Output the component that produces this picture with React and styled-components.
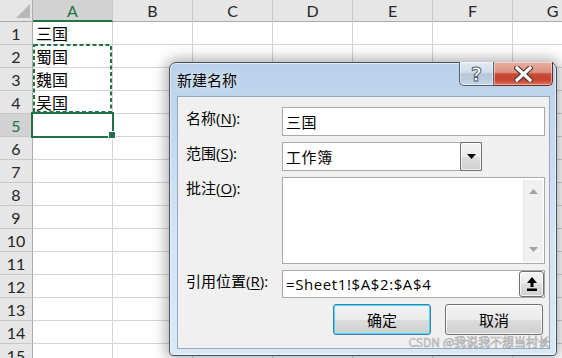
import React from 'react';
import styled, { createGlobalStyle, css } from 'styled-components';

const GlobalStyle = createGlobalStyle`
  html, body { margin: 0; padding: 0; background: #fff; overflow: hidden; }
  #root { width: 562px; height: 358px; overflow: hidden; }
`;

const Screen = styled.div`
  position: relative;
  width: 562px;
  height: 358px;
  overflow: hidden;
  background: #fff;
`;

/* ---------- spreadsheet ---------- */
const Sheet = styled.div`
  display: grid;
  grid-template-columns: 33px repeat(7, 80px);
  grid-template-rows: 22px;
  grid-auto-rows: 23px;
  width: 593px;
`;

const Corner = styled.div`
  position: relative;
  box-sizing: border-box;
  background: #e6e6e6;
  border-right: 1px solid #ababab;
  border-bottom: 1px solid #ababab;
  &::after {
    content: '';
    position: absolute;
    right: 2px;
    bottom: 3px;
    width: 0;
    height: 0;
    border-left: 14px solid transparent;
    border-bottom: 14px solid #b8b8b8;
  }
`;

const ColHead = styled.div`
  box-sizing: border-box;
  display: flex;
  align-items: center;
  justify-content: center;
  font-family: Lato, 'Liberation Sans', sans-serif;
  font-size: 16px;
  color: #262626;
  background: #e6e6e6;
  border-right: 1px solid #c8c8c8;
  border-bottom: 1px solid #ababab;
  ${(p) =>
    p.$active &&
    css`
      background: #d2d2d2;
      color: #217346;
      border-bottom: 2px solid #217346;
      padding-top: 1px;
    `}
`;

const RowHead = styled.div`
  box-sizing: border-box;
  display: flex;
  align-items: center;
  justify-content: center;
  font-family: Lato, 'Liberation Sans', sans-serif;
  font-size: 16px;
  color: #262626;
  background: #e6e6e6;
  border-right: 1px solid #ababab;
  border-bottom: 1px solid #c8c8c8;
  ${(p) =>
    p.$active &&
    css`
      background: #d2d2d2;
      color: #217346;
      border-right: 2px solid #217346;
      padding-left: 1px;
    `}
`;

const Cell = styled.div`
  box-sizing: border-box;
  display: flex;
  align-items: center;
  padding-left: 3px;
  font-family: 'Noto Sans CJK SC', sans-serif;
  font-size: 16px;
  color: #000;
  border-right: 1px solid #d4d4d4;
  border-bottom: 1px solid #d4d4d4;
  white-space: nowrap;
  overflow: hidden;
`;

const Marquee = styled.svg`
  position: absolute;
  left: 33px;
  top: 44px;
`;

const ActiveCell = styled.div`
  position: absolute;
  left: 31px;
  top: 112px;
  width: 83px;
  height: 26px;
  box-sizing: border-box;
  border: 2px solid #217346;
`;

const FillHandle = styled.div`
  position: absolute;
  left: 109px;
  top: 132px;
  width: 6px;
  height: 6px;
  background: #217346;
  box-shadow: 0 0 0 1px #fff;
`;

/* ---------- dialog ---------- */
const Dialog = styled.div`
  position: absolute;
  left: 169px;
  top: 62px;
  width: 388px;
  height: 294px;
  box-sizing: border-box;
  display: flex;
  flex-direction: column;
  border: 1px solid #46535f;
  border-radius: 7px 7px 4px 4px;
  background: linear-gradient(180deg, #b9d1ea 0%, #c6dbf1 30%, #d3e4f6 60%, #d9e8f7 100%);
  box-shadow: 0 0 14px 3px rgba(0, 0, 0, 0.32), inset 0 0 0 1px rgba(255, 255, 255, 0.55);
  font-family: 'Open Sans', 'Noto Sans CJK SC', sans-serif;
`;

const TitleBar = styled.div`
  position: relative;
  height: 33px;
  flex: none;
  display: flex;
  align-items: center;
  padding-left: 7px;
`;

const Title = styled.span`
  font-family: 'Noto Sans CJK SC', sans-serif;
  font-size: 15px;
  color: #000;
  text-shadow: 0 0 6px rgba(255, 255, 255, 0.9);
`;

const CaptionButtons = styled.div`
  position: absolute;
  top: -1px;
  right: 3px;
  display: flex;
`;

const CaptionBtn = styled.div`
  box-sizing: border-box;
  height: 24px;
  display: flex;
  align-items: center;
  justify-content: center;
  border: 1px solid #55606d;
  border-top: none;
  box-shadow: inset 0 0 0 1px rgba(255, 255, 255, 0.45);
  ${(p) =>
    p.$close
      ? css`
          width: 59px;
          border-radius: 0 0 5px 0;
          border-left: none;
          background: linear-gradient(180deg, #e8ae9f 0%, #dc9281 45%, #c94a36 52%, #c8452f 78%, #d8735e 100%);
          border-color: #6b2b24;
        `
      : css`
          width: 35px;
          border-radius: 0 0 0 5px;
          background: linear-gradient(180deg, #e3ebf4 0%, #d1dde9 45%, #b6c7da 52%, #bccde0 80%, #cbd9e8 100%);
        `}
`;

const HelpGlyph = styled.span`
  font-family: 'DejaVu Sans', sans-serif;
  font-weight: bold;
  font-size: 19px;
  line-height: 1;
  color: #fff;
  -webkit-text-stroke: 1px #56606e;
  margin-top: 1px;
`;

const Client = styled.div`
  position: relative;
  flex: 1;
  margin: 0 6px 6px 7px;
  box-sizing: border-box;
  background: #f0f0f0;
  border: 1px solid #97a8ba;
  padding: 10px 4px 0 8px;
`;

const Form = styled.div`
  display: grid;
  grid-template-columns: 96px 263px;
  grid-template-rows: 29px 29px 87px 28px 31px;
  row-gap: 6px;
`;

const Label = styled.div`
  align-self: start;
  padding-top: 1px;
  font-size: 15px;
  line-height: 20px;
  color: #000;
  white-space: nowrap;
`;

const Key = styled.span`
  text-decoration: underline;
  text-underline-offset: 2px;
`;

const Field = styled.div`
  box-sizing: border-box;
  display: flex;
  align-items: center;
  background: #fff;
  border: 1px solid #a9a9a9;
  font-size: 15px;
  color: #000;
  ${(p) => p.$narrow && css`width: 200px;`}
  ${(p) => p.$tall && css`align-items: stretch;`}
`;

const FieldText = styled.span`
  flex: 1;
  padding-left: 3px;
  white-space: nowrap;
  letter-spacing: 0.6px;
`;

const DropBtn = styled.div`
  box-sizing: border-box;
  width: 22px;
  align-self: stretch;
  margin: -1px -1px -1px 0;
  display: flex;
  align-items: center;
  justify-content: center;
  border: 1px solid #6f6f6f;
  border-radius: 2px;
  background: linear-gradient(180deg, #f4f4f4 0%, #ebebeb 50%, #dcdcdc 52%, #d0d0d0 100%);
  box-shadow: inset 0 0 0 1px rgba(255, 255, 255, 0.7);
`;

const Scrollbar = styled.div`
  width: 20px;
  margin: 2px 1px 1px auto;
  display: flex;
  flex-direction: column;
  justify-content: space-between;
  align-items: center;
  padding: 9px 0 10px;
  box-sizing: border-box;
  background: #f0f0f0;
  border-left: 1px solid #e6e6e6;
`;

const CollapseBtn = styled.div`
  box-sizing: border-box;
  width: 25px;
  height: 26px;
  margin-left: auto;
  margin-right: 0;
  display: flex;
  align-items: center;
  justify-content: center;
  border: 1px solid #707070;
  border-radius: 3px;
  background: linear-gradient(180deg, #f4f4f4 0%, #ebebeb 50%, #dddddd 52%, #d0d0d0 100%);
  box-shadow: inset 0 0 0 1px rgba(255, 255, 255, 0.75);
`;

const ButtonRow = styled.div`
  grid-column: 1 / -1;
  display: flex;
  justify-content: flex-end;
  gap: 14px;
  padding-right: 2px;
`;

const Button = styled.div`
  box-sizing: border-box;
  width: 98px;
  height: 31px;
  display: flex;
  align-items: center;
  justify-content: center;
  font-family: 'Noto Sans CJK SC', sans-serif;
  font-size: 15px;
  color: #000;
  border: 1px solid #707070;
  border-radius: 3px;
  background: linear-gradient(180deg, #f2f2f2 0%, #ebebeb 50%, #dddddd 51%, #cfcfcf 100%);
  box-shadow: inset 0 0 0 1px rgba(255, 255, 255, 0.8);
  ${(p) =>
    p.$default &&
    css`
      border-color: #3c7fb1;
      box-shadow: inset 0 0 0 1px #48d8fb;
    `}
`;

const Grip = styled.svg`
  position: absolute;
  right: 1px;
  bottom: 1px;
`;

const Watermark = styled.div`
  position: absolute;
  right: 12px;
  bottom: 8px;
  font-family: 'Noto Sans CJK SC', sans-serif;
  font-size: 12px;
  line-height: 16px;
  color: rgba(255, 255, 255, 0.55);
  -webkit-text-stroke: 0.6px rgba(140, 140, 140, 0.75);
  white-space: nowrap;
  pointer-events: none;
`;

const cols = ['A', 'B', 'C', 'D', 'E', 'F', 'G'];
const data = { 1: '三国', 2: '蜀国', 3: '魏国', 4: '吴国' };

export default function App() {
  const rows = Array.from({ length: 15 }, (_, i) => i + 1);
  return (
    <Screen>
      <GlobalStyle />
      <Sheet>
        <Corner />
        {cols.map((c) => (
          <ColHead key={c} $active={c === 'A'}>
            {c}
          </ColHead>
        ))}
        {rows.map((r) => (
          <React.Fragment key={r}>
            <RowHead $active={r === 5}>{r}</RowHead>
            {cols.map((c) => (
              <Cell key={c}>{c === 'A' ? data[r] || '' : ''}</Cell>
            ))}
          </React.Fragment>
        ))}
      </Sheet>

      <Marquee width="79" height="69" viewBox="0 0 79 69">
        <rect x="1" y="1" width="77" height="67" fill="none" stroke="#217346" strokeWidth="2" strokeDasharray="4 2.5" />
      </Marquee>
      <ActiveCell />
      <FillHandle />

      <Dialog>
        <TitleBar>
          <Title>新建名称</Title>
          <CaptionButtons>
            <CaptionBtn>
              <HelpGlyph>?</HelpGlyph>
            </CaptionBtn>
            <CaptionBtn $close>
              <svg width="19" height="16" viewBox="0 0 19 16">
                <path d="M3 2 L16 14 M16 2 L3 14" stroke="#4a3a38" strokeWidth="5.5" strokeLinecap="square" />
                <path d="M3 2 L16 14 M16 2 L3 14" stroke="#fff" strokeWidth="3.2" strokeLinecap="square" />
              </svg>
            </CaptionBtn>
          </CaptionButtons>
        </TitleBar>

        <Client>
          <Form>
            <Label>
              名称(<Key>N</Key>):
            </Label>
            <Field>
              <FieldText>三国</FieldText>
            </Field>

            <Label>
              范围(<Key>S</Key>):
            </Label>
            <Field $narrow>
              <FieldText>工作簿</FieldText>
              <DropBtn>
                <svg width="9" height="5" viewBox="0 0 9 5">
                  <path d="M0 0 H9 L4.5 5 Z" fill="#000" />
                </svg>
              </DropBtn>
            </Field>

            <Label>
              批注(<Key>O</Key>):
            </Label>
            <Field $tall>
              <Scrollbar>
                <svg width="9" height="5" viewBox="0 0 9 5">
                  <path d="M0 5 H9 L4.5 0 Z" fill="#a3a3a3" />
                </svg>
                <svg width="9" height="5" viewBox="0 0 9 5">
                  <path d="M0 0 H9 L4.5 5 Z" fill="#a3a3a3" />
                </svg>
              </Scrollbar>
            </Field>

            <Label>
              引用位置(<Key>R</Key>):
            </Label>
            <Field>
              <FieldText>=Sheet1!$A$2:$A$4</FieldText>
              <CollapseBtn>
                <svg width="10" height="15" viewBox="0 0 10 15">
                  <path d="M5 0 L10 6 H0 Z" fill="#000" />
                  <rect x="3.5" y="5" width="3" height="5" fill="#000" />
                  <rect x="0" y="11.5" width="10" height="2.5" fill="#000" />
                </svg>
              </CollapseBtn>
            </Field>

            <ButtonRow>
              <Button $default>确定</Button>
              <Button>取消</Button>
            </ButtonRow>
          </Form>
          <Grip width="10" height="10" viewBox="0 0 10 10">
            <path d="M9 2 L2 9 M9 5 L5 9 M9 8 L8 9" stroke="#b5b5b5" strokeWidth="1.2" />
          </Grip>
        </Client>
      </Dialog>

      <Watermark>CSDN @我说我不想当村长</Watermark>
    </Screen>
  );
}
